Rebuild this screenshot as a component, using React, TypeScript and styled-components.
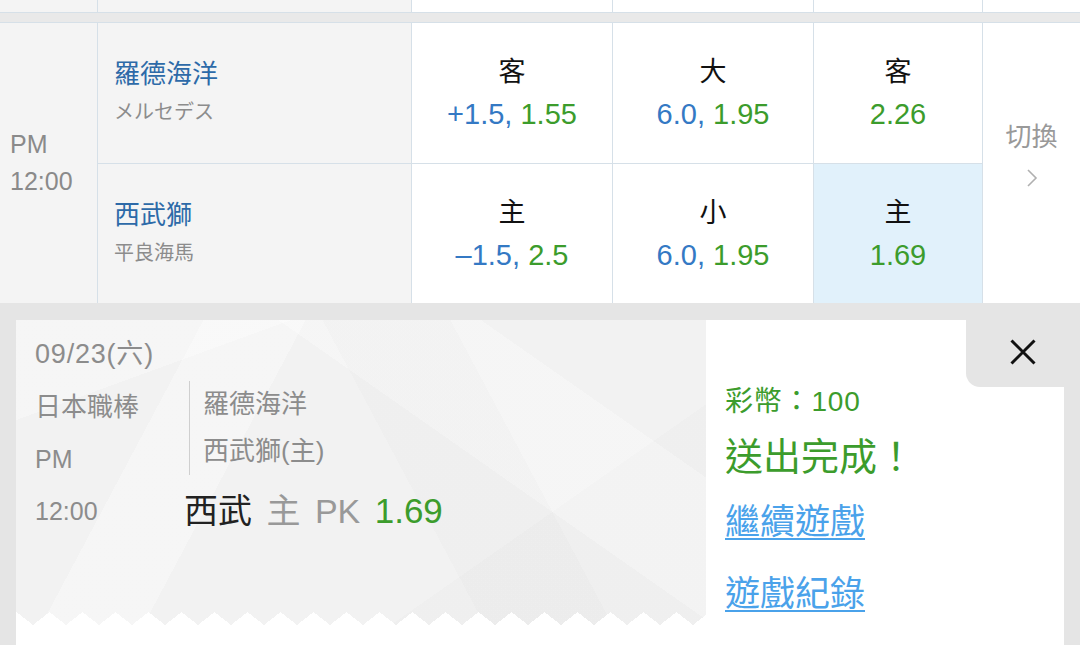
import styled, { createGlobalStyle } from 'styled-components';

const LINE = '#d6e0e8';
const GREEN = '#3c9c2c';
const BLUE = '#3479c4';
const COLS = '97px 313px 200px 200px 168px 1fr';

const GlobalStyle = createGlobalStyle`
	* { box-sizing: border-box; }
	html, body { margin: 0; padding: 0; }
	body {
		width: 1080px;
		height: 645px;
		overflow: hidden;
		background: #e5e5e5;
		font-family: 'Liberation Sans', 'Noto Sans CJK TC', sans-serif;
	}
`;

const Page = styled.div`
	width: 1080px;
	height: 645px;
	display: flex;
	flex-direction: column;
	background: #e5e5e5;
	overflow: hidden;
`;

const PrevRow = styled.div`
	display: grid;
	grid-template-columns: ${COLS};
	column-gap: 1px;
	height: 12px;
	background: ${LINE};
`;

const Cell = styled.div<{ $tone?: 'gray' | 'white' | 'pick' }>`
	background: ${(p) =>
		p.$tone === 'gray' ? '#f4f4f4' : p.$tone === 'pick' ? '#e1f1fb' : '#fff'};
`;

const Separator = styled.div`
	height: 11px;
	background: #e9e9e9;
	border-top: 1px solid ${LINE};
	border-bottom: 1px solid ${LINE};
`;

const Match = styled.div`
	display: grid;
	grid-template-columns: ${COLS};
	grid-template-rows: 140px 139px;
	gap: 1px;
	background: ${LINE};
`;

const TimeCell = styled(Cell)`
	grid-row: 1 / span 2;
	display: flex;
	flex-direction: column;
	justify-content: center;
	padding-left: 10px;
	color: #8a8a8a;
	font-size: 25px;
	line-height: 37px;
`;

const TeamCell = styled(Cell)`
	display: flex;
	flex-direction: column;
	justify-content: center;
	padding-left: 16px;
`;

const TeamName = styled.div`
	color: #2d6aa8;
	font-size: 26px;
	line-height: 38px;
`;

const Pitcher = styled.div`
	color: #8c8c8c;
	font-size: 20px;
	line-height: 38px;
	font-family: 'Liberation Sans', 'Noto Sans CJK JP', sans-serif;
`;

const OddsCell = styled(Cell)`
	display: flex;
	flex-direction: column;
	justify-content: center;
	align-items: center;
	line-height: 42px;
`;

const OddsLabel = styled.div`
	color: #111;
	font-size: 27px;
`;

const OddsValue = styled.div`
	font-size: 29px;
`;

const Num = styled.span<{ $c: 'blue' | 'green' }>`
	color: ${(p) => (p.$c === 'blue' ? BLUE : GREEN)};
`;

const SwitchCell = styled(Cell)`
	grid-row: 1 / span 2;
	grid-column: 6;
	display: flex;
	flex-direction: column;
	align-items: center;
	justify-content: center;
	padding-bottom: 21px;
	color: #999;
	font-size: 26px;
	line-height: 40px;

	svg {
		margin-top: 11px;
	}
`;

const Bottom = styled.div`
	flex: 1;
	display: flex;
	padding: 17px 16px 0 16px;
	min-height: 0;
`;

const TicketCol = styled.div`
	width: 690px;
	display: flex;
	flex-direction: column;
`;

const Ticket = styled.div`
	height: 305px;
	padding: 16px 19px 0 19px;
	color: #8c8c8c;
	background:
		conic-gradient(from 128.2deg at 50% 0%, #fff 0deg 103.6deg, transparent 103.6deg)
			17px 100% / 33px 13px repeat-x,
		linear-gradient(118deg, transparent 0 22%, rgba(255, 255, 255, 0.3) 22% 34%, transparent 34%),
		linear-gradient(62deg, transparent 0 55%, rgba(0, 0, 0, 0.012) 55% 70%, transparent 70%),
		linear-gradient(160deg, rgba(255, 255, 255, 0.3) 0 18%, transparent 18%),
		linear-gradient(35deg, transparent 0 62%, rgba(255, 255, 255, 0.28) 62% 80%, transparent 80%),
		linear-gradient(145deg, transparent 0 72%, rgba(0, 0, 0, 0.012) 72%),
		#f2f2f2;
`;

const TicketFoot = styled.div`
	flex: 1;
	background: #fff;
`;

const DateLine = styled.div`
	font-size: 27px;
	line-height: 36px;
	letter-spacing: 0.8px;
	margin-bottom: 9px;
`;

const InfoGrid = styled.div`
	display: grid;
	grid-template-columns: 149px 1fr;
	align-items: start;
`;

const Meta = styled.div<{ $size?: number }>`
	font-size: ${(p) => p.$size ?? 25}px;
	line-height: 52px;
`;

const Teams = styled.div`
	margin-left: 5px;
	padding-left: 13px;
	border-left: 1px solid #cfcfcf;
	font-size: 26px;
	line-height: 47px;
`;

const BetLine = styled.div`
	font-size: 34px;
	line-height: 52px;
	color: #999;
	white-space: pre;
	word-spacing: 5px;
`;

const BetTeam = styled.span`
	color: #222;
`;

const BetOdds = styled.span`
	color: ${GREEN};
	font-size: 35px;
`;

const Result = styled.div`
	width: 358px;
	background: #fff;
	display: flex;
	flex-direction: column;
`;

const CloseRow = styled.div`
	display: flex;
	justify-content: flex-end;
`;

const CloseTab = styled.button`
	width: 98px;
	height: 67px;
	border: none;
	padding: 0 0 4px 15px;
	background: #e5e5e5;
	border-bottom-left-radius: 14px;
	display: flex;
	align-items: center;
	justify-content: center;
	cursor: pointer;
`;

const ResultBody = styled.div`
	padding-left: 19px;
	display: flex;
	flex-direction: column;
	align-items: flex-start;
`;

const Coins = styled.div`
	color: ${GREEN};
	font-size: 28px;
	line-height: 30px;
	letter-spacing: 0.8px;
`;

const Done = styled.div`
	color: ${GREEN};
	font-size: 38px;
	line-height: 44px;
	margin-top: 18px;
`;

const Link = styled.a<{ $gap: number }>`
	color: #4aa2ea;
	font-size: 35px;
	line-height: 44px;
	margin-top: ${(p) => p.$gap}px;
	text-decoration: underline;
	text-decoration-thickness: 2px;
	text-underline-offset: 4px;
	cursor: pointer;
`;

type Side = {
	name: string;
	pitcher: string;
	handicap: [string, string, string];
	total: [string, string, string];
	win: [string, string];
};

const sides: Side[] = [
	{
		name: '羅德海洋',
		pitcher: 'メルセデス',
		handicap: ['客', '+1.5', '1.55'],
		total: ['大', '6.0', '1.95'],
		win: ['客', '2.26'],
	},
	{
		name: '西武獅',
		pitcher: '平良海馬',
		handicap: ['主', '–1.5', '2.5'],
		total: ['小', '6.0', '1.95'],
		win: ['主', '1.69'],
	},
];

function Chevron() {
	return (
		<svg width="12" height="20" viewBox="0 0 12 20">
			<polyline points="2,2 10,10 2,18" fill="none" stroke="#b0b0b0" strokeWidth="1.6" />
		</svg>
	);
}

function CloseIcon() {
	return (
		<svg width="26" height="26" viewBox="0 0 26 26">
			<path d="M1.5 1.5 L24.5 24.5 M24.5 1.5 L1.5 24.5" stroke="#111" strokeWidth="3" />
		</svg>
	);
}

export default function App(): JSX.Element {
	return (
		<Page>
			<GlobalStyle />
			<PrevRow>
				<Cell $tone="gray" />
				<Cell $tone="gray" />
				<Cell />
				<Cell />
				<Cell />
				<Cell />
			</PrevRow>
			<Separator />
			<Match>
				<TimeCell $tone="gray">
					<div>PM</div>
					<div>12:00</div>
				</TimeCell>
				{sides.map((s, i) => [
					<TeamCell key={`t${i}`} $tone="gray" style={{ gridColumn: 2, gridRow: i + 1 }}>
						<TeamName>{s.name}</TeamName>
						<Pitcher>{s.pitcher}</Pitcher>
					</TeamCell>,
					<OddsCell key={`h${i}`}>
						<OddsLabel>{s.handicap[0]}</OddsLabel>
						<OddsValue>
							<Num $c="blue">{s.handicap[1]}, </Num>
							<Num $c="green">{s.handicap[2]}</Num>
						</OddsValue>
					</OddsCell>,
					<OddsCell key={`o${i}`}>
						<OddsLabel>{s.total[0]}</OddsLabel>
						<OddsValue>
							<Num $c="blue">{s.total[1]}, </Num>
							<Num $c="green">{s.total[2]}</Num>
						</OddsValue>
					</OddsCell>,
					<OddsCell key={`w${i}`} $tone={i === 1 ? 'pick' : 'white'}>
						<OddsLabel>{s.win[0]}</OddsLabel>
						<OddsValue>
							<Num $c="green">{s.win[1]}</Num>
						</OddsValue>
					</OddsCell>,
				])}
				<SwitchCell>
					<div>切換</div>
					<Chevron />
				</SwitchCell>
			</Match>

			<Bottom>
				<TicketCol>
					<Ticket>
						<DateLine>09/23(六)</DateLine>
						<InfoGrid>
							<div>
								<Meta $size={26}>日本職棒</Meta>
								<Meta>PM</Meta>
							</div>
							<Teams>
								<div>羅德海洋</div>
								<div>西武獅(主)</div>
							</Teams>
							<Meta>12:00</Meta>
							<BetLine>
								<BetTeam>西武</BetTeam> 主 PK <BetOdds>1.69</BetOdds>
							</BetLine>
						</InfoGrid>
					</Ticket>
					<TicketFoot />
				</TicketCol>
				<Result>
					<CloseRow>
						<CloseTab aria-label="close">
							<CloseIcon />
						</CloseTab>
					</CloseRow>
					<ResultBody>
						<Coins>彩幣：100</Coins>
						<Done>送出完成！</Done>
						<Link $gap={21}>繼續遊戲</Link>
						<Link $gap={28}>遊戲紀錄</Link>
					</ResultBody>
				</Result>
			</Bottom>
		</Page>
	);
}
